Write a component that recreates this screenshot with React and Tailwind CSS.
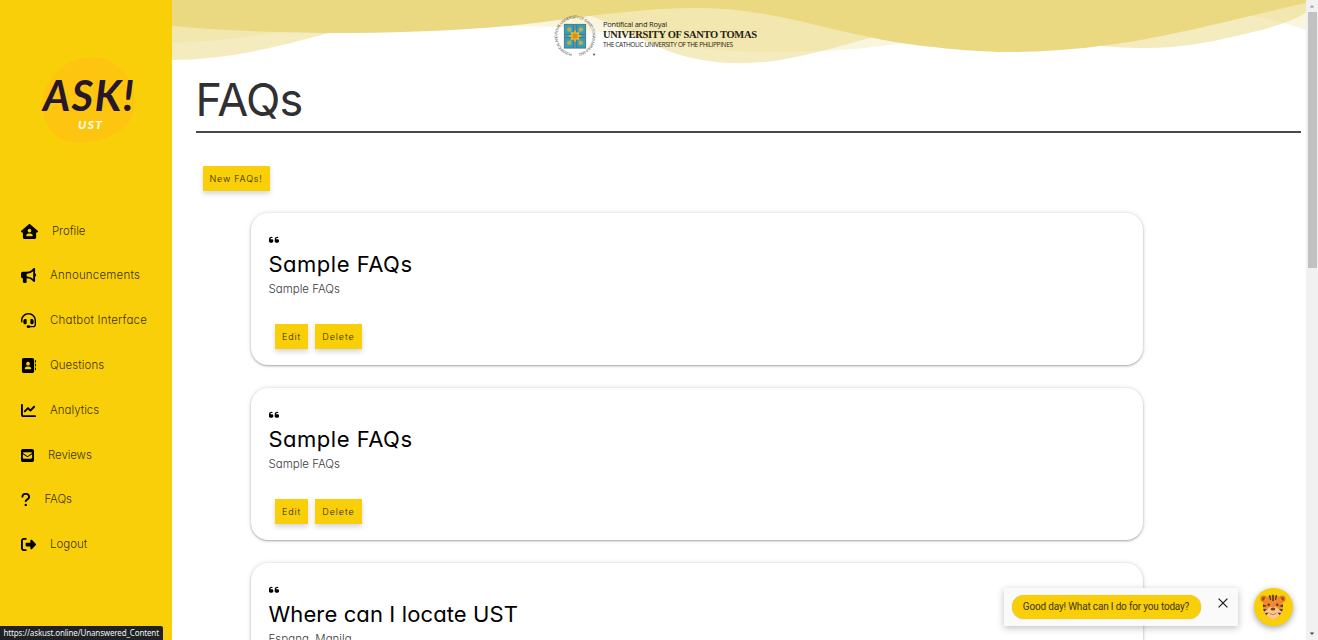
import {
  FaHouseUser,
  FaBullhorn,
  FaHeadset,
  FaAddressBook,
  FaChartLine,
  FaSquareEnvelope,
  FaQuestion,
  FaRightFromBracket,
  FaQuoteLeft,
} from "react-icons/fa6";

const NAV = [
  { label: "Profile", Icon: FaHouseUser, size: "w-[17px]", track: "-tracking-[0.1px]" },
  { label: "Announcements", Icon: FaBullhorn, size: "w-[15px]", track: "tracking-[0.2px]" },
  { label: "Chatbot Interface", Icon: FaHeadset, size: "w-[15px]", track: "tracking-[0.2px]" },
  { label: "Questions", Icon: FaAddressBook, size: "w-[15px]", track: "tracking-[0.05px]" },
  { label: "Analytics", Icon: FaChartLine, size: "w-[15px]", track: "tracking-normal" },
  { label: "Reviews", Icon: FaSquareEnvelope, size: "w-[13px]", track: "-tracking-[0.1px]" },
  { label: "FAQs", Icon: FaQuestion, size: "w-[9.5px]", track: "-tracking-[0.1px]" },
  { label: "Logout", Icon: FaRightFromBracket, size: "w-[15px]", track: "tracking-normal" },
];

const FAQS = [
  { title: "Sample FAQs", body: "Sample FAQs", track: "tracking-[0.5px]" },
  { title: "Sample FAQs", body: "Sample FAQs", track: "tracking-[0.5px]" },
  { title: "Where can I locate UST", body: "Espana, Manila", track: "tracking-[0.12px]" },
];

function AskLogo() {
  return (
    <svg viewBox="0 0 100 96" className="h-24 w-[100px]">
      <path
        d="M4 50C6 28 28 7 54 7c26 1 42 23 42 43-1 24-12 30-27 37-15 5-36 10-49 1C8 79 2 64 4 50Z"
        fill="#fdc50f"
      />
      <text
        x="4"
        y="60.5"
        textLength="91"
        lengthAdjust="spacing"
        fontFamily="Lato, sans-serif"
        fontStyle="italic"
        fontWeight="700"
        fontSize="42"
        fill="#26172b"
      >
        ASK!
      </text>
      <text
        x="39"
        y="79"
        textLength="24"
        lengthAdjust="spacing"
        fontFamily="Lato, sans-serif"
        fontStyle="italic"
        fontWeight="900"
        fontSize="12"
        fill="#fffbe8"
      >
        UST
      </text>
    </svg>
  );
}

function Sidebar() {
  return (
    <aside className="flex w-[171.5px] shrink-0 flex-col bg-[#f8cf08]">
      <div className="flex h-[208.8px] pt-[50px] pl-[39px]">
        <AskLogo />
      </div>
      <nav className="flex flex-col pl-[21px]">
        {NAV.map(({ label, Icon, size, track }) => (
          <a key={label} className="flex h-[44.8px] items-center gap-[14px] text-[11.5px] font-light text-black">
            <Icon preserveAspectRatio="none" className={`h-[15px] ${size}`} />
            <span className={`text-black/80 ${track}`}>{label}</span>
          </a>
        ))}
      </nav>
    </aside>
  );
}

function Waves() {
  return (
    <svg viewBox="0 0 1135 70" preserveAspectRatio="none" className="absolute inset-0 h-[70px] w-full">
      <path
        d="M0 0V43C35 42 70 38 101 33C200 15 290 14 339 26C400 25 440 34 480 41C530 50 570 53 620 52C670 51 700 48 730 43C850 20 960 5 1060 13C1085 15 1110 22 1135 30V0Z"
        fill="#ead980"
        fillOpacity="0.26"
      />
      <path
        d="M0 0V60C60 59 105 47 157 33C230 14 300 0 360 2C425 10 450 32 494 50C530 64 570 66 609 60C640 54 670 46 701 37C780 14 830 22 870 37C890 42 930 48 975 48C1020 48 1060 37 1090 30C1112 24 1125 19 1135 12V0Z"
        fill="#ead980"
        fillOpacity="0.5"
      />
      <path
        d="M0 0V26C60 31 110 33 180 33C260 32 330 28 379 21C430 14 480 8 525 8C600 8 650 30 729 43C780 50 815 52 836 52C890 52 935 46 975 39C1030 29 1080 15 1135 3V0Z"
        fill="#ead980"
      />
    </svg>
  );
}

function Crest() {
  return (
    <svg viewBox="0 0 44 44" className="-ml-px h-11 w-11">
      <defs>
        <path id="ring" d="M19 39.500A17.700 17.700 0 1 1 25 39.500" />
      </defs>
      <text fontFamily="Liberation Sans, sans-serif" fontSize="3.9" fill="#5a5a55">
        <textPath href="#ring" textLength="104">
          PONTIFICAL AND ROYAL UNIVERSITY OF SANTO TOMAS MANILA 1611
        </textPath>
      </text>
      <rect x="11.3" y="10.3" width="21.4" height="23.8" fill="#2ba0cc" stroke="#5b6a42" strokeWidth="0.8" />
      <path d="M22 11v23M12 22h20" stroke="#18313f" strokeWidth="2.4" />
      <path d="M22 11v23M12 22h20" stroke="#cfe3e6" strokeWidth="1" />
      <g fill="#c9a83c">
        <circle cx="16.3" cy="15.5" r="2.3" />
        <circle cx="27.8" cy="15.5" r="2.3" />
        <circle cx="16.3" cy="28.8" r="2.3" />
        <circle cx="27.8" cy="28.8" r="2.3" />
      </g>
      <path
        d="m22 15.500 1.500 3.200 3-1.500-.8 3.300 3.500 1.500-3.500 1.500.8 3.300-3-1.500-1.500 3.200-1.500-3.200-3 1.500.8-3.300-3.500-1.500 3.500-1.500-.8-3.300 3 1.500Z"
        fill="#f0b429"
      />
      <circle cx="22" cy="22" r="2.600" fill="#d99116" />
      <circle cx="41" cy="40.500" r="1" fill="#555" />
    </svg>
  );
}

function UniversityBanner() {
  return (
    <header className="relative h-[70px] shrink-0">
      <Waves />
      <div className="relative flex pt-[14px] pl-[382px]">
        <Crest />
        <div className="flex flex-col pt-[5px] pl-[6.500px] whitespace-nowrap text-[#25221a]">
          <span className="font-['Open_Sans'] text-[7.5px] leading-[11px] font-medium -tracking-[0.23px]">
            Pontifical and Royal
          </span>
          <span className="font-['Liberation_Serif'] text-[10.500px] leading-[10px] font-bold -tracking-[0.32px]">
            UNIVERSITY OF SANTO TOMAS
          </span>
          <span className="font-['Open_Sans'] text-[6.500px] leading-[9px] font-medium -tracking-[0.36px]">
            THE CATHOLIC UNIVERSITY OF THE PHILIPPINES
          </span>
        </div>
      </div>
    </header>
  );
}

function YellowButton({ children, className }) {
  return (
    <button
      className={`h-[24.5px] bg-[#f8cf08] text-center text-[9px] font-light whitespace-nowrap text-[#2a2400] shadow-[0_3px_5px_rgba(0,0,0,0.16)] ${className}`}
    >
      {children}
    </button>
  );
}

function FaqCard({ title, body, track }) {
  return (
    <article className="flex h-[152.5px] shrink-0 flex-col rounded-[17px] bg-white pt-[22px] pl-[17.5px] shadow-[0_1px_2px_rgba(40,50,50,0.36),0_0_5px_rgba(0,0,0,0.13)]">
      <FaQuoteLeft preserveAspectRatio="none" className="h-[9.500px] w-[10px]" />
      <h2 className={`mt-1 text-[22px] leading-[32px] text-black ${track}`}>{title}</h2>
      <p className="text-[11.500px] leading-[18px] font-light text-[#3c3c3c]">{body}</p>
      <div className="mt-[26px] flex gap-[7px] pl-[6.500px]">
        <YellowButton className="w-[33px] tracking-[0.9px]">Edit</YellowButton>
        <YellowButton className="w-[47px] tracking-[0.95px]">Delete</YellowButton>
      </div>
    </article>
  );
}

function Tiger() {
  return (
    <svg viewBox="0 0 26 26" className="h-[26px] w-[26px]">
      <circle cx="3.800" cy="4.800" r="3.400" fill="#e07a22" />
      <circle cx="22.200" cy="4.800" r="3.400" fill="#e07a22" />
      <circle cx="3.800" cy="5" r="1.700" fill="#8a4a2a" />
      <circle cx="22.200" cy="5" r="1.700" fill="#8a4a2a" />
      <path d="M3 11C3 4 7 1.500 13 1.500S23 4 23 11c0 9-4.500 14-10 14S3 20 3 11Z" fill="#f08a2c" />
      <path d="M4 16c2-1 4-1 6-3h6c2 2 4 2 6 3-1 6-5 9-9 9s-8-3-9-9Z" fill="#fbc78d" />
      <g fill="#3a2f2c">
        <path d="M12.300.8h1.400V7h-1.400zM8.800 1.300h1.500l.7 4.700h-1zM17.200 1.300h-1.500L15 6h1z" />
        <path d="m3 10.500 4 1.500-4 1ZM3.300 15l4 .5-3.300 2ZM5 19l3.500-.5L6.500 21ZM23 10.500 19 12l4 1ZM22.700 15l-4 .5 3.300 2ZM21 19l-3.500-.5 2 2.500Z" />
      </g>
      <circle cx="8.700" cy="10.800" r="1.200" fill="#5a3322" />
      <circle cx="17.300" cy="10.800" r="1.200" fill="#5a3322" />
      <ellipse cx="13" cy="15" rx="2.300" ry="1.500" fill="#7a3f1c" />
      <path d="M9.500 19.500q3.500 2.500 7-.3" fill="none" stroke="#b5722f" strokeWidth="0.800" />
    </svg>
  );
}

function ChatPrompt() {
  return (
    <div className="absolute right-[25.500px] bottom-[14px] flex items-center gap-4">
      <div className="flex h-[38.500px] w-[234px] bg-[#fafafa] pt-[7px] pl-[7.500px] shadow-[0_2px_7px_rgba(0,0,0,0.25)]">
        <span className="flex h-6 w-[189px] items-center justify-center rounded-full bg-[#f8cf08] font-['Roboto'] text-[10px] whitespace-nowrap -tracking-[0.18px] text-[#40370a] shadow-[0_0_1px_rgba(120,100,0,0.5)]">
          Good day! What can I do for you today?
        </span>
        <svg viewBox="0 0 10 10" className="mt-[3px] ml-[17px] h-[10px] w-[10px]">
          <path d="m.6.6 8.800 8.800M9.400.6.6 9.400" stroke="#222" strokeWidth="1.300" />
        </svg>
      </div>
      <div className="flex h-[38.500px] w-[38.500px] items-center justify-center rounded-full bg-[#f8cf08] shadow-[0_2px_6px_rgba(0,0,0,0.35)]">
        <Tiger />
      </div>
    </div>
  );
}

function Scrollbar() {
  return (
    <div className="flex w-3 shrink-0 flex-col items-center bg-[#f1f1f1]">
      <svg viewBox="0 0 12 12" className="h-3 w-3">
        <path d="m3.800 7.500 2.200-2.500 2.200 2.500Z" fill="#9a9a9a" />
      </svg>
      <div className="w-[9px] flex-none basis-64 bg-[#c1c1c1]" />
      <div className="grow" />
      <svg viewBox="0 0 12 12" className="h-3 w-3">
        <path d="m3.800 4.500 2.200 2.500 2.200-2.500Z" fill="#444" />
      </svg>
    </div>
  );
}

export default function App() {
  return (
    <div className="relative flex h-[640px] w-[1318px] overflow-hidden bg-white font-['Inter',sans-serif] [font-feature-settings:'cv11']">
      <Sidebar />
      <main className="flex min-w-0 grow flex-col overflow-hidden bg-white">
        <UniversityBanner />
        <h1 className="mr-[5px] ml-6 h-[63px] shrink-0 border-b-2 border-[#4a4849] text-[45px] leading-[60px] -tracking-[0.8px] text-[#303032]">
          FAQs
        </h1>
        <div className="mt-[33px] flex shrink-0 pl-[31px]">
          <YellowButton className="w-[67px] tracking-[0.78px]">New FAQs!</YellowButton>
        </div>
        <section className="mt-[22px] mr-[163px] ml-[79.500px] flex shrink-0 flex-col gap-[22.500px]">
          {FAQS.map((faq, i) => (
            <FaqCard key={i} {...faq} />
          ))}
        </section>
      </main>
      <Scrollbar />
      <ChatPrompt />
      <div className="absolute bottom-0 left-0 flex h-[14px] w-[162.500px] items-center rounded-tr-[2px] bg-[#202124] pl-[3.500px] font-['Noto_Sans'] text-[8px] whitespace-nowrap -tracking-[0.15px] text-[#eef0f2]">
        https://askust.online/Unanswered_Content
      </div>
    </div>
  );
}
